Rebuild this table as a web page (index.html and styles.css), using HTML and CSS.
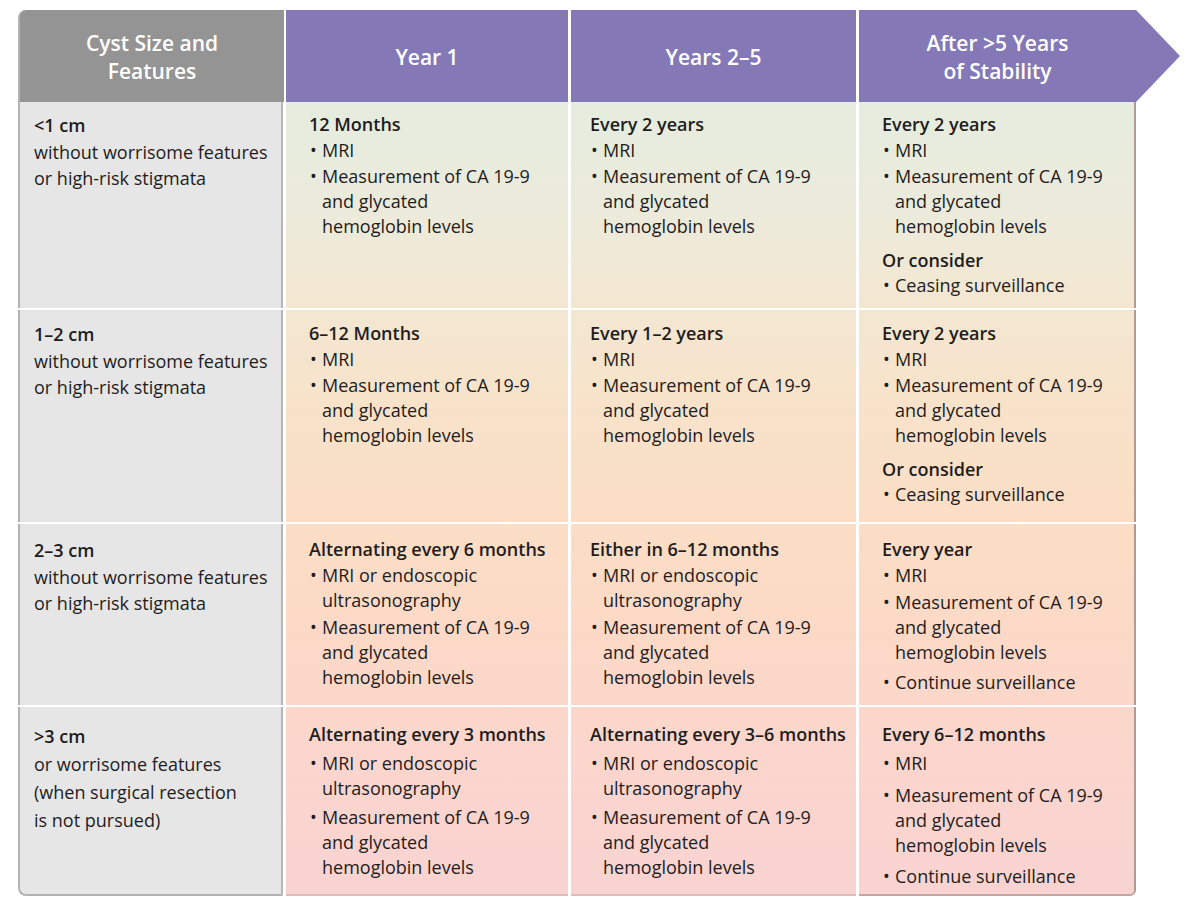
FILE: index.html
```html
<!DOCTYPE html>
<html lang="en">
<head>
<meta charset="utf-8">
<title>Cyst Surveillance</title>
<link rel="stylesheet" href="styles.css">
</head>
<body>
<div class="wrap">
  <div class="head">
    <div class="hcell hfirst">Cyst Size and<br>Features</div>
    <div class="hcell hpurple">Year 1</div>
    <div class="hcell hpurple">Years 2–5</div>
    <div class="hcell hpurple hlast">After &gt;5 Years<br>of Stability</div>
  </div>
  <div class="body">
    <!-- Row 1 -->
    <div class="cell side r1"><div class="st">&lt;1 cm</div><div>without worrisome features</div><div>or high-risk stigmata</div></div>
    <div class="cell c2 r1">
      <div class="t">12 Months</div>
      <ul><li>MRI</li><li><span>Measurement of CA 19-9<br>and glycated<br>hemoglobin levels</span></li></ul>
    </div>
    <div class="cell c3 r1">
      <div class="t">Every 2 years</div>
      <ul><li>MRI</li><li><span>Measurement of CA 19-9<br>and glycated<br>hemoglobin levels</span></li></ul>
    </div>
    <div class="cell c4 r1">
      <div class="t">Every 2 years</div>
      <ul><li>MRI</li><li><span>Measurement of CA 19-9<br>and glycated<br>hemoglobin levels</span></li></ul>
      <div class="t or">Or consider</div>
      <ul class="tight"><li>Ceasing surveillance</li></ul>
    </div>
    <!-- Row 2 -->
    <div class="cell side r2"><div class="st">1–2 cm</div><div>without worrisome features</div><div>or high-risk stigmata</div></div>
    <div class="cell c2 r2">
      <div class="t">6–12 Months</div>
      <ul><li>MRI</li><li><span>Measurement of CA 19-9<br>and glycated<br>hemoglobin levels</span></li></ul>
    </div>
    <div class="cell c3 r2">
      <div class="t">Every 1–2 years</div>
      <ul><li>MRI</li><li><span>Measurement of CA 19-9<br>and glycated<br>hemoglobin levels</span></li></ul>
    </div>
    <div class="cell c4 r2">
      <div class="t">Every 2 years</div>
      <ul><li>MRI</li><li><span>Measurement of CA 19-9<br>and glycated<br>hemoglobin levels</span></li></ul>
      <div class="t or">Or consider</div>
      <ul class="tight"><li>Ceasing surveillance</li></ul>
    </div>
    <!-- Row 3 -->
    <div class="cell side r3"><div class="st">2–3 cm</div><div>without worrisome features</div><div>or high-risk stigmata</div></div>
    <div class="cell c2 r3">
      <div class="t">Alternating every 6 months</div>
      <ul><li><span>MRI or endoscopic<br>ultrasonography</span></li><li><span>Measurement of CA 19-9<br>and glycated<br>hemoglobin levels</span></li></ul>
    </div>
    <div class="cell c3 r3">
      <div class="t">Either in 6–12 months</div>
      <ul><li><span>MRI or endoscopic<br>ultrasonography</span></li><li><span>Measurement of CA 19-9<br>and glycated<br>hemoglobin levels</span></li></ul>
    </div>
    <div class="cell c4 r3">
      <div class="t">Every year</div>
      <ul><li>MRI</li><li><span>Measurement of CA 19-9<br>and glycated<br>hemoglobin levels</span></li><li class="gap">Continue surveillance</li></ul>
    </div>
    <!-- Row 4 -->
    <div class="cell side r4 last"><div class="st">&gt;3 cm</div><div>or worrisome features</div><div>(when surgical resection</div><div>is not pursued)</div></div>
    <div class="cell c2 r4 bottom">
      <div class="t">Alternating every 3 months</div>
      <ul><li><span>MRI or endoscopic<br>ultrasonography</span></li><li><span>Measurement of CA 19-9<br>and glycated<br>hemoglobin levels</span></li></ul>
    </div>
    <div class="cell c3 r4 bottom">
      <div class="t">Alternating every 3–6 months</div>
      <ul><li><span>MRI or endoscopic<br>ultrasonography</span></li><li><span>Measurement of CA 19-9<br>and glycated<br>hemoglobin levels</span></li></ul>
    </div>
    <div class="cell c4 r4 bottom corner">
      <div class="t">Every 6–12 months</div>
      <ul><li>MRI</li><li class="wide"><span>Measurement of CA 19-9<br>and glycated<br>hemoglobin levels</span></li><li class="gap">Continue surveillance</li></ul>
    </div>
  </div>
</div>
</body>
</html>
```

FILE: styles.css
```css
html, body {
  margin: 0;
  padding: 0;
  background: #ffffff;
}
body {
  font-family: "Open Sans", "Noto Sans", sans-serif;
  font-size: 18px;
  color: #1f1c1d;
}
.wrap {
  margin: 10px 0 0 18px;
  width: 1162px;
}
.head {
  display: grid;
  grid-template-columns: 265px 282px 285px 321px;
  column-gap: 3px;
  height: 92px;
}
.hcell {
  display: flex;
  align-items: center;
  justify-content: center;
  text-align: center;
  color: #ffffff;
  font-weight: 600;
  font-size: 21px;
  line-height: 28px;
  padding-top: 1px;
  box-sizing: border-box;
}
.hfirst {
  background: #949494;
  border-left: 2px solid #b3b3b3;
  border-top-left-radius: 8px;
  margin-right: -1px;
}
.hpurple {
  background: #8478b6;
}
.hlast {
  padding-right: 44px;
  clip-path: polygon(0 0, calc(100% - 44px) 0, 100% 50%, calc(100% - 44px) 100%, 0 100%);
}
.body {
  display: grid;
  grid-template-columns: 265px 282px 285px 277px;
  grid-template-rows: 206px 212px 181px 189px;
  column-gap: 3px;
  row-gap: 2px;
}
.cell {
  box-sizing: border-box;
  background-image: linear-gradient(180deg,
    #e5eddf 102px,
    #ebebdc 200px,
    #f3e7d2 300px,
    #f7e3ca 400px,
    #fbdec5 520px,
    #fcd9c7 640px,
    #fbd6cc 740px,
    #f9d3d1 896px);
  background-attachment: fixed;
  line-height: 25px;
}
.side {
  background: #e6e6e6;
  border-left: 2px solid #b3b3b3;
  border-right: 2px solid #b5b5b5;
  padding-left: 14px;
  line-height: 26.5px;
}
.side.r4 { line-height: 28px; }
.last {
  border-bottom: 2px solid #b3b3b3;
  border-bottom-left-radius: 8px;
}
.st, .t {
  font-weight: 600;
}
.c2 { padding-left: 23px; }
.c3 { padding-left: 19px; }
.c4 {
  padding-left: 23px;
  border-right: 2px solid #b49a92;
}
.bottom { border-bottom: 2px solid #dcbdb8; }
.corner {
  border-bottom-color: #c4a7a0;
  border-bottom-right-radius: 6px;
}
.r1 { padding-top: 10px; }
.r2 { padding-top: 11px; }
.r3 { padding-top: 13px; }
.r4 { padding-top: 15px; }
.t { margin-bottom: 1px; }
ul {
  list-style: none;
  margin: 0;
  padding: 0;
}
li {
  display: flex;
  margin-top: 1px;
}
li::before {
  content: "•";
  flex: none;
  width: 13px;
  padding-left: 1px;
  box-sizing: border-box;
}
.r3 li { margin-top: 2px; }
.r4 .t { margin-bottom: 4px; }
.r4 li { margin-top: 4px; }
.r4 li.wide { margin-top: 7px; }
.r4 li:first-child, .r3 li:first-child { margin-top: 0; }
li.gap { margin-top: 5px; }
.r4 li.gap { margin-top: 6px; }
.or { margin-top: 9px; margin-bottom: 0; }
.tight li { margin-top: 0; }
```
